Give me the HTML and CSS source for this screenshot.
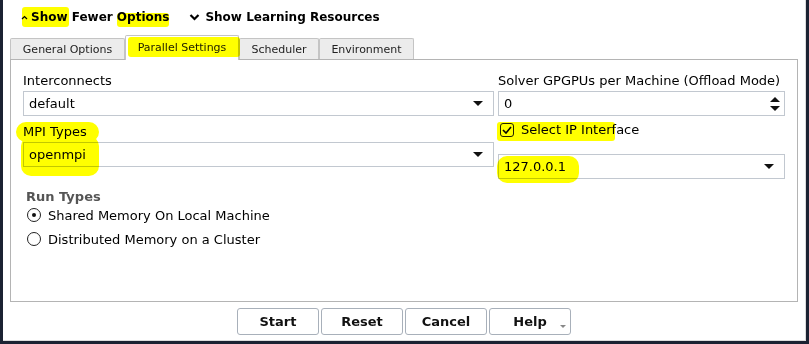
FILE: index.html
```html
<!DOCTYPE html>
<html lang="en">
<head>
    <meta charset="UTF-8">
    <title>Parallel Settings</title>
    <link rel="stylesheet" href="styles.css">
</head>
<body>
    <div class="window">
        <div class="header">
            <span class="toggle">
                <svg class="caret-up" width="7" height="5" viewBox="0 0 7 5"><path d="M1 4 L3.5 1.5 L6 4" fill="none" stroke="#000" stroke-width="1.2"/></svg>
                Show Fewer Options
            </span>
            <span class="toggle">
                <svg class="caret-down" width="11" height="8" viewBox="0 0 11 8"><path d="M1.5 2 L5.5 6 L9.5 2" fill="none" stroke="#000" stroke-width="2.2"/></svg>
                Show Learning Resources
            </span>
        </div>

        <div class="tabs">
            <div class="tab general">General Options</div>
            <div class="tab active">Parallel Settings</div>
            <div class="tab scheduler">Scheduler</div>
            <div class="tab environment">Environment</div>
        </div>

        <div class="panel">
            <div class="form">
                <div class="col">
                    <div class="label">Interconnects</div>
                    <div class="combo">
                        <span>default</span>
                        <span class="arrow"></span>
                    </div>
                    <div class="label second">MPI Types</div>
                    <div class="combo">
                        <span>openmpi</span>
                        <span class="arrow"></span>
                    </div>
                </div>
                <div class="col">
                    <div class="label">Solver GPGPUs per Machine (Offload Mode)</div>
                    <div class="combo spin">
                        <span>0</span>
                        <span class="spin-arrows">
                            <span class="up"></span>
                            <span class="down"></span>
                        </span>
                    </div>
                    <div class="check-row">
                        <span class="checkbox">
                            <svg width="10" height="8" viewBox="0 0 10 8"><path d="M1 4 L4 7 L9 1" fill="none" stroke="#000" stroke-width="1.6"/></svg>
                        </span>
                        Select IP Interface
                    </div>
                    <div class="combo ip">
                        <span>127.0.0.1</span>
                        <span class="arrow"></span>
                    </div>
                </div>
            </div>

            <div class="run-types">
                <div class="group-title">Run Types</div>
                <div class="radio-row"><span class="radio checked"></span>Shared Memory On Local Machine</div>
                <div class="radio-row"><span class="radio"></span>Distributed Memory on a Cluster</div>
            </div>
        </div>

        <div class="buttons">
            <button class="btn">Start</button>
            <button class="btn">Reset</button>
            <button class="btn">Cancel</button>
            <button class="btn help">Help<span class="menu-mark"></span></button>
        </div>

        <!-- marker highlights drawn over the screenshot -->
        <div class="mark" style="left:19px;top:7px;width:47px;height:20px"></div>
        <div class="mark" style="left:114px;top:13px;width:52px;height:14px"></div>
        <div class="mark" style="left:125px;top:37px;width:112px;height:20px"></div>
        <div class="mark blob" style="left:13px;top:122px;width:83px;height:20px"></div>
        <div class="mark blob" style="left:18px;top:136px;width:78px;height:40px"></div>
        <div class="mark" style="left:494px;top:122px;width:118px;height:19px"></div>
        <div class="mark blob" style="left:494px;top:156px;width:82px;height:27px"></div>
    </div>
</body>
</html>
```

FILE: styles.css
```css
body {
    margin: 0;
    background-color: #1b2232;
    font-family: "DejaVu Sans", sans-serif;
    font-size: 13px;
    color: #000;
}

.window {
    position: relative;
    width: 802px;
    height: 340px;
    margin-left: 3px;
    background-color: #fff;
    border-right: 1px solid #dcdcdc;
    border-bottom: 1px solid #dcdcdc;
}

.header {
    display: flex;
    align-items: center;
    gap: 20px;
    height: 34px;
    padding-left: 18px;
    font-size: 12px;
    font-weight: bold;
}

.toggle {
    display: flex;
    align-items: center;
    gap: 3px;
}

.caret-down {
    margin-right: 2px;
}

.tabs {
    display: flex;
    height: 25px;
    padding-left: 7px;
    align-items: flex-end;
    font-size: 11px;
}

.tab {
    box-sizing: border-box;
    height: 21px;
    line-height: 22px;
    text-align: center;
    background-color: #ececec;
    border: 1px solid #c4c4c4;
    border-bottom: none;
    border-radius: 2px 2px 0 0;
    color: #222;
}

.tab.general {
    width: 115px;
}

.tab.scheduler {
    width: 80px;
}

.tab.environment {
    width: 95px;
}

.tab.active {
    width: 114px;
    height: 25px;
    line-height: 24px;
    background-color: #fff;
    position: relative;
    top: 1px;
    z-index: 1;
}

.panel {
    margin-left: 7px;
    width: 786px;
    height: 241px;
    border: 1px solid #b4b4b4;
}

.form {
    display: flex;
    gap: 4px;
    padding: 13px 0 0 12px;
}

.col {
    display: flex;
    flex-direction: column;
}

.col:first-child {
    width: 471px;
}

.col:last-child {
    width: 287px;
}

.label {
    height: 16px;
    line-height: 16px;
    margin-bottom: 2px;
}

.label.second {
    margin-top: 8px;
}

.combo {
    display: flex;
    align-items: center;
    justify-content: space-between;
    box-sizing: border-box;
    height: 25px;
    padding: 0 10px 0 5px;
    border: 1px solid #c2c8d0;
    background-color: #fff;
}

.arrow {
    width: 0;
    height: 0;
    border-left: 5px solid transparent;
    border-right: 5px solid transparent;
    border-top: 5px solid #111;
}

.spin {
    padding-right: 4px;
}

.spin-arrows {
    display: flex;
    flex-direction: column;
    gap: 4px;
}

.spin-arrows .up {
    border-left: 5px solid transparent;
    border-right: 5px solid transparent;
    border-bottom: 5px solid #111;
}

.spin-arrows .down {
    border-left: 5px solid transparent;
    border-right: 5px solid transparent;
    border-top: 5px solid #111;
}

.check-row {
    display: flex;
    align-items: center;
    gap: 7px;
    height: 17px;
    margin: 5px 0 16px 2px;
}

.checkbox {
    display: flex;
    align-items: center;
    justify-content: center;
    box-sizing: border-box;
    width: 14px;
    height: 14px;
    border: 1px solid #222;
    border-radius: 3px;
}

.run-types {
    padding: 12px 0 0 15px;
}

.group-title {
    font-weight: bold;
    color: #555;
    height: 12px;
    line-height: 12px;
}

.radio-row {
    display: flex;
    align-items: center;
    gap: 7px;
    height: 24px;
    margin-left: 1px;
}

.radio {
    box-sizing: border-box;
    width: 14px;
    height: 14px;
    border: 1px solid #222;
    border-radius: 50%;
    display: flex;
    align-items: center;
    justify-content: center;
}

.radio.checked::after {
    content: "";
    width: 4px;
    height: 4px;
    border-radius: 50%;
    background-color: #111;
}

.buttons {
    display: flex;
    justify-content: center;
    gap: 2px;
    margin-top: 6px;
}

.btn {
    position: relative;
    width: 82px;
    height: 27px;
    font-family: "DejaVu Sans", sans-serif;
    font-size: 13px;
    font-weight: bold;
    background-color: #fff;
    border: 1px solid #a8b0ba;
    border-radius: 3px;
    color: #111;
}

.menu-mark {
    position: absolute;
    right: 4px;
    bottom: 6px;
    border-left: 3px solid transparent;
    border-right: 3px solid transparent;
    border-top: 3px solid #888;
}

.mark {
    position: absolute;
    background-color: #ffff00;
    mix-blend-mode: multiply;
    border-radius: 3px;
    z-index: 5;
}

.mark.blob {
    border-radius: 10px;
}
```
